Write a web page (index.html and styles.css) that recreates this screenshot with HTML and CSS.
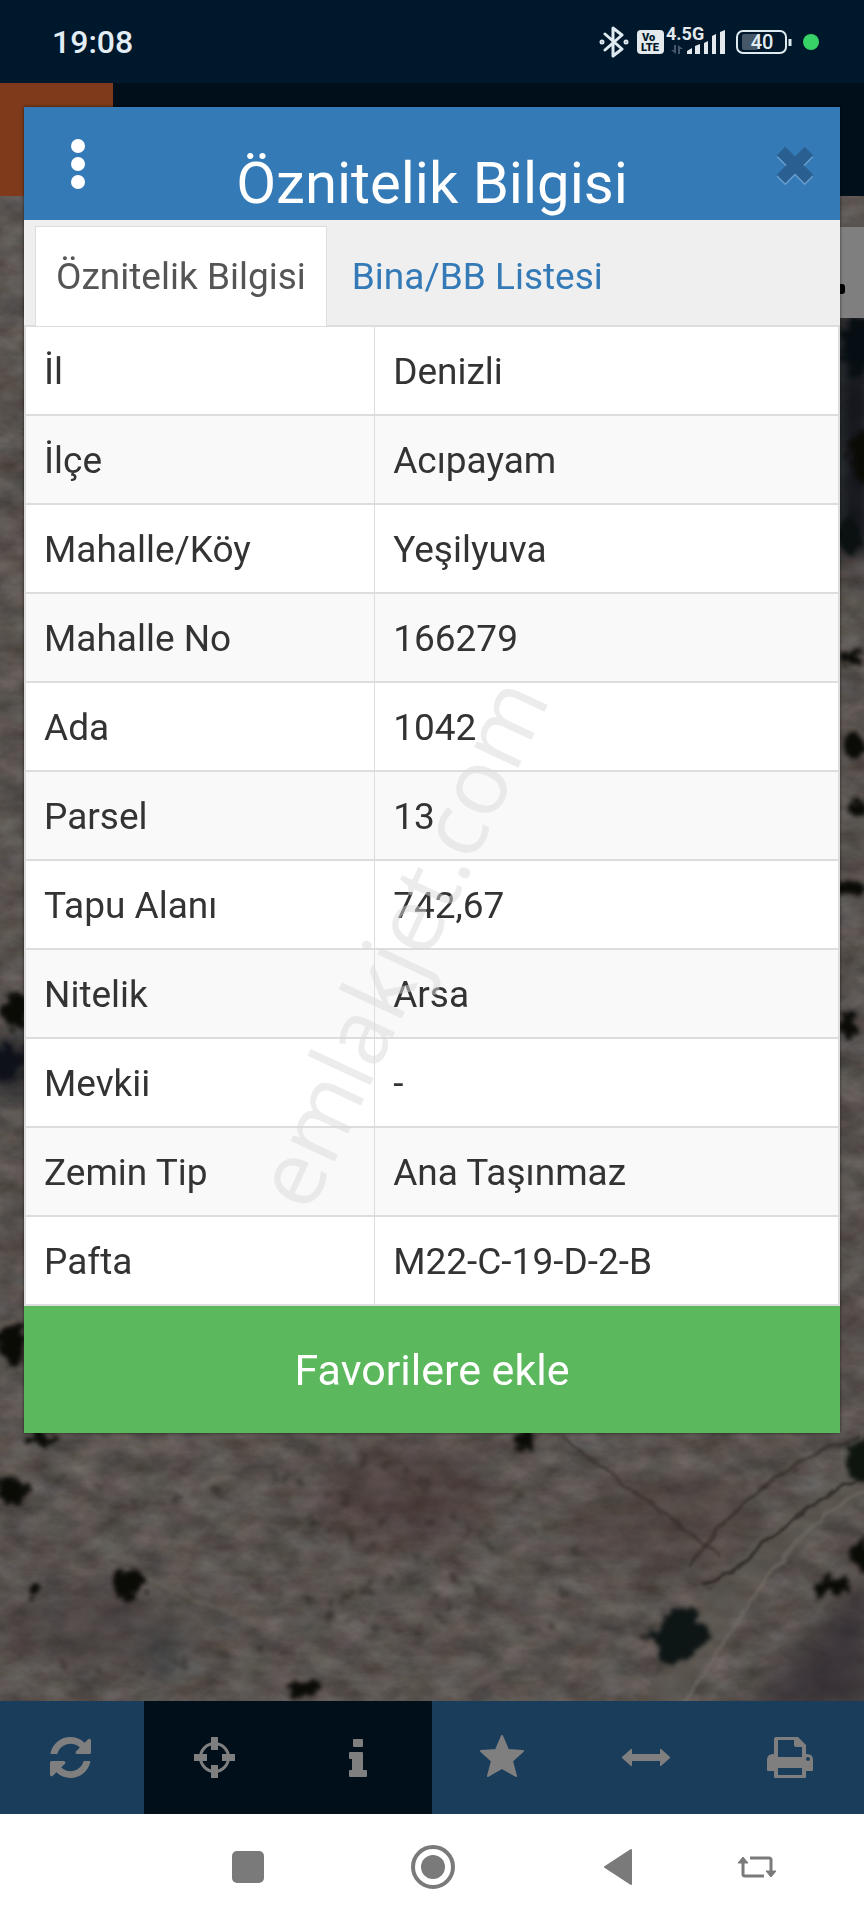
FILE: index.html
```html
<!DOCTYPE html>
<html lang="tr">
<head>
    <meta charset="UTF-8">
    <meta name="viewport" content="width=device-width, initial-scale=1.0">
    <title>Öznitelik Bilgisi</title>
    <link rel="stylesheet" href="styles.css">
</head>
<body>
    <div class="status-bar">
        <span class="status-time">19:08</span>
        <div class="status-icons">
            <svg class="icon-bluetooth" width="30" height="32" viewBox="0 0 30 32" fill="none" stroke="#dfe9f0" stroke-width="3" stroke-linejoin="round" stroke-linecap="round">
                <path d="M6 8l17 15-9 7V2l9 7L6 24"/>
                <circle cx="3" cy="16" r="1"/>
                <circle cx="27" cy="16" r="1"/>
            </svg>
            <svg width="27" height="24" viewBox="0 0 27 24">
                <rect width="27" height="24" rx="4" fill="#e3e9ed"/>
                <text x="5" y="11" class="volte-text">Vo</text>
                <text x="4" y="21" class="volte-text">LTE</text>
            </svg>
            <svg class="icon-signal" width="60" height="34" viewBox="0 0 60 34" fill="#e3e9ed">
                <text x="0" y="17" class="signal-text">4.5G</text>
                <path d="M10 22v9l-5-4h3v-5zM12 31v-9l5 4h-3v5z" fill="#44586a"/>
                <path d="M21 31v-3l5-3v6zM29 31v-8l5-2v10zM38 31V20l4-2v13zM46 31V13l4-2v20zM54 31V9l5-2v24z"/>
            </svg>
            <svg class="icon-battery" width="57" height="26" viewBox="0 0 57 26">
                <rect x="6" y="5" width="16" height="16" rx="2" fill="#44586a"/>
                <rect x="1" y="2" width="49" height="22" rx="6" fill="none" stroke="#dfe9f0" stroke-width="2"/>
                <path d="M54 10v7" stroke="#dfe9f0" stroke-width="3"/>
                <text x="26" y="20" class="battery-text">40</text>
            </svg>
            <span class="status-dot"></span>
        </div>
    </div>

    <div class="app">
        <div class="page">
            <header class="page-header">
                <div class="page-logo"></div>
            </header>

            <div class="map">
                <svg class="map-image" viewBox="0 0 864 1505" preserveAspectRatio="xMidYMax slice" aria-hidden="true">
                    <defs>
                        <filter id="ground" x="0" y="0" width="100%" height="100%" color-interpolation-filters="sRGB">
                            <feTurbulence type="fractalNoise" baseFrequency="0.03 0.05" numOctaves="5" seed="7"/>
                            <feColorMatrix values="0.42 0.1 0 0 0.44  0.42 0 0 0 0.44  0.42 0 0.08 0 0.37  0 0 0 0 1"/>
                        </filter>
                        <filter id="rough" x="-20%" y="-20%" width="140%" height="140%">
                            <feTurbulence type="fractalNoise" baseFrequency="0.09" numOctaves="3" seed="3"/>
                            <feDisplacementMap in="SourceGraphic" scale="22" xChannelSelector="R" yChannelSelector="G" result="shape"/>
                            <feGaussianBlur in="shape" stdDeviation="2"/>
                        </filter>
                        <filter id="track" x="-20%" y="-20%" width="140%" height="140%">
                            <feTurbulence type="fractalNoise" baseFrequency="0.05" numOctaves="2" seed="5"/>
                            <feDisplacementMap in="SourceGraphic" scale="10" xChannelSelector="R" yChannelSelector="G" result="shape"/>
                            <feGaussianBlur in="shape" stdDeviation="1"/>
                        </filter>
                        <filter id="soft" x="-30%" y="-30%" width="160%" height="160%">
                            <feGaussianBlur stdDeviation="14"/>
                        </filter>
                    </defs>
                    <rect width="864" height="1505" filter="url(#ground)"/>

                    <!-- toprak tonları -->
                    <g filter="url(#soft)">
                        <ellipse cx="400" cy="1300" rx="90" ry="50" fill="#7a4c4c" opacity="0.35"/>
                        <ellipse cx="165" cy="1460" rx="24" ry="26" fill="#60767c" opacity="0.5"/>
                        <ellipse cx="90" cy="1430" rx="90" ry="40" fill="#6d5f66" opacity="0.35"/>
                        <ellipse cx="670" cy="1330" rx="90" ry="50" fill="#86665e" opacity="0.35"/>
                        <path d="M740 1520l134-150v150z" fill="#5e5360" opacity="0.7"/>
                        <path d="M835 120h40v240h-40z" fill="#16222e"/>
                        <path d="M-10 845h34v50h-34z" fill="#16222e"/>
                    </g>

                    <!-- yol -->
                    <g fill="none" filter="url(#track)">
                        <path d="M870 1275Q790 1330 750 1375T660 1510" stroke="#b8b0a0" stroke-width="34" opacity="0.5"/>
                        <path d="M870 1290Q800 1330 765 1385L685 1505" stroke="#e6dece" stroke-width="4" opacity="0.5"/>
                        <path d="M870 1275Q780 1325 740 1373L700 1390" stroke="#40382e" stroke-width="4" opacity="0.6"/>
                        <path d="M860 1240Q760 1270 690 1370" stroke="#5a5044" stroke-width="4" opacity="0.5"/>
                        <path d="M560 1240L720 1360" stroke="#5a4c44" stroke-width="4" opacity="0.4"/>
                        <path d="M108 1366L260 1430" stroke="#d0c6ba" stroke-width="5" opacity="0.4"/>
                    </g>

                    <!-- çalılar -->
                    <g fill="none" stroke="#4c4238" stroke-width="7" stroke-linecap="round" opacity="0.5" filter="url(#rough)">
                        <path stroke-dasharray="1 22" d="M280 1280l60 20 50 30 60-10 50 40M290 1310l70 40 60 10 70 40M260 1390l60 20 80-30 60 30M330 1420l80 20 70-40M340 1260l60 10 40 30"/>
                        <path stroke-dasharray="1 40" d="M60 1280l80 30 100-20M20 1460l100 20 150-30M520 1300l60 60-30 80M760 1290l60-30"/>
                    </g>

                    <!-- ağaçlar -->
                    <g fill="#14140f" filter="url(#rough)">
                        <ellipse cx="128" cy="1388" rx="15" ry="14"/>
                        <ellipse cx="12" cy="1294" rx="16" ry="13"/>
                        <ellipse cx="12" cy="1148" rx="14" ry="22"/>
                        <ellipse cx="42" cy="1244" rx="18" ry="6"/>
                        <ellipse cx="34" cy="1394" rx="6" ry="6"/>
                        <ellipse cx="304" cy="1492" rx="18" ry="10"/>
                        <ellipse cx="525" cy="1244" rx="8" ry="12"/>
                        <path d="M668 1412l26 4 16 26-20 16-26 12-2-22-20-8 18-8z" fill="#1c2c2a"/>
                        <path d="M848 1246l26-6v44h-22z" fill="#1a2a1e"/>
                        <ellipse cx="862" cy="1360" rx="10" ry="18"/>
                        <path d="M820 1386l28-8 2 16-24 4-12 14z"/>
                        <ellipse cx="16" cy="815" rx="12" ry="20"/>
                        <ellipse cx="8" cy="866" rx="20" ry="14" fill="#1a2230"/>
                        <ellipse cx="858" cy="150" rx="16" ry="30" fill="#101c28"/>
                        <ellipse cx="862" cy="260" rx="12" ry="24"/>
                        <ellipse cx="850" cy="340" rx="12" ry="16" fill="#142420"/>
                        <ellipse cx="852" cy="462" rx="10" ry="10"/>
                        <ellipse cx="856" cy="550" rx="12" ry="10"/>
                        <ellipse cx="860" cy="610" rx="8" ry="9"/>
                        <ellipse cx="852" cy="690" rx="10" ry="8"/>
                        <ellipse cx="848" cy="830" rx="12" ry="10"/>
                    </g>
                </svg>
                <div class="map-panel"><span class="map-panel-mark"></span></div>
            </div>

            <nav class="toolbar">
                <button type="button" class="tool" aria-label="Yenile">
                    <svg width="41" height="41" viewBox="0 0 1536 1536" fill="currentColor"><path d="M1511 928q0 5-1 7-64 268-268 434.500t-478 166.500q-146 0-282.500-55t-243.500-157l-129 129q-19 19-45 19t-45-19-19-45v-448q0-26 19-45t45-19h448q26 0 45 19t19 45-19 45l-137 137q71 66 161 102t187 36q134 0 250-65t186-179q11-17 53-117 8-23 30-23h192q13 0 22.500 9.500t9.500 22.500zm25-800v448q0 26-19 45t-45 19h-448q-26 0-45-19t-19-45 19-45l138-138q-148-137-349-137-134 0-250 65t-186 179q-11 17-53 117-8 23-30 23h-199q-13 0-22.500-9.500t-9.500-22.500v-7q65-268 270-434.500t480-166.500q146 0 284 55.500t245 156.500l130-129q19-19 45-19t45 19 19 45z"/></svg>
                </button>
                <button type="button" class="tool tool-dark" aria-label="Konum">
                    <svg width="41" height="41" viewBox="0 0 41 41" fill="currentColor">
                        <circle cx="20.500" cy="20.500" r="14" fill="none" stroke="currentColor" stroke-width="3"/>
                        <path d="M17 0h7v13h-7zM17 28h7v13h-7zM0 17h13v7H0zM28 17h13v7H28z"/>
                    </svg>
                </button>
                <button type="button" class="tool tool-dark" aria-label="Bilgi">
                    <svg width="18" height="38" viewBox="0 0 18 38" fill="currentColor"><path d="M5 0h8q1 0 1 1v6q0 1-1 1H5q-1 0-1-1V1q0-1 1-1zM1 13h12q1 0 1 1v17h3q1 0 1 1v5q0 1-1 1H1q-1 0-1-1v-5q0-1 1-1h2V20H1q-1 0-1-1v-5q0-1 1-1z"/></svg>
                </button>
                <button type="button" class="tool" aria-label="Favoriler">
                    <svg class="icon-star" width="46" height="44" viewBox="0 0 46 44" fill="currentColor" stroke="currentColor" stroke-width="2" stroke-linejoin="round"><path d="M23 2l6 14 15 1-11 10 4 15-14-8-14 8 4-15L2 17l15-1z"/></svg>
                </button>
                <button type="button" class="tool" aria-label="Ölçüm">
                    <svg width="48" height="17" viewBox="0 0 48 17" fill="currentColor"><path d="M0 8L9 0h1v5h28V0h1l9 8v1l-9 8h-1v-5H10v5H9L0 9z"/></svg>
                </button>
                <button type="button" class="tool" aria-label="Yazdır">
                    <svg width="46" height="41" viewBox="0 0 46 41" fill="currentColor" fill-rule="evenodd"><path d="M9 0h22l8 8v9h1q6 0 6 6v10q0 1-1 1h-6v6q0 1-1 1H8q-1 0-1-1v-6H1q-1 0-1-1V23q0-6 6-6h1V2q0-2 2-2zM11 3v17h24V10h-6q-2 0-2-2V3zM11 31v7h24v-7zM41 20a2 2 0 100 4 2 2 0 000-4z"/></svg>
                </button>
            </nav>
        </div>

        <div class="modal-layer">
            <section class="modal" role="dialog" aria-labelledby="modal-title">
                <header class="modal-header">
                    <button type="button" class="modal-menu" aria-label="Menü">
                        <svg width="14" height="50" viewBox="0 0 14 50" fill="currentColor">
                            <circle cx="7" cy="7" r="7"/>
                            <circle cx="7" cy="25" r="7"/>
                            <circle cx="7" cy="43" r="7"/>
                        </svg>
                    </button>
                    <h1 class="modal-title" id="modal-title">Öznitelik Bilgisi</h1>
                    <button type="button" class="modal-close" aria-label="Kapat">
                        <svg width="38" height="40" viewBox="0 0 38 40" stroke-width="12">
                            <path d="M5 7l28 28M33 7L5 35" stroke="#6a9fce"/>
                            <path d="M5 5l28 28M33 5L5 33" stroke="#295f91"/>
                        </svg>
                    </button>
                </header>

                <div class="tabs">
                    <a href="#oznitelik" class="tab tab-active">Öznitelik Bilgisi</a>
                    <a href="#bina" class="tab">Bina/BB Listesi</a>
                </div>

                <table class="info-table" id="oznitelik">
                    <tbody>
                        <tr><th scope="row">İl</th><td>Denizli</td></tr>
                        <tr><th scope="row">İlçe</th><td>Acıpayam</td></tr>
                        <tr><th scope="row">Mahalle/Köy</th><td>Yeşilyuva</td></tr>
                        <tr><th scope="row">Mahalle No</th><td>166279</td></tr>
                        <tr><th scope="row">Ada</th><td>1042</td></tr>
                        <tr><th scope="row">Parsel</th><td>13</td></tr>
                        <tr><th scope="row">Tapu Alanı</th><td>742,67</td></tr>
                        <tr><th scope="row">Nitelik</th><td>Arsa</td></tr>
                        <tr><th scope="row">Mevkii</th><td>-</td></tr>
                        <tr><th scope="row">Zemin Tip</th><td>Ana Taşınmaz</td></tr>
                        <tr><th scope="row">Pafta</th><td>M22-C-19-D-2-B</td></tr>
                    </tbody>
                </table>

                <button type="button" class="btn-favorite">Favorilere ekle</button>
                <span class="watermark">emlakjet.com</span>
            </section>
        </div>
    </div>

    <nav class="system-nav">
        <button type="button" class="nav-recent" aria-label="Son uygulamalar">
            <svg width="32" height="32" viewBox="0 0 32 32" fill="currentColor"><rect width="32" height="32" rx="5"/></svg>
        </button>
        <button type="button" aria-label="Ana ekran">
            <svg width="44" height="44" viewBox="0 0 44 44" fill="currentColor">
                <circle cx="22" cy="22" r="20" fill="none" stroke="currentColor" stroke-width="4"/>
                <circle cx="22" cy="22" r="12"/>
            </svg>
        </button>
        <button type="button" aria-label="Geri">
            <svg width="30" height="38" viewBox="0 0 30 38" fill="currentColor" stroke="currentColor" stroke-width="2" stroke-linejoin="round"><path d="M2 19L28 2v34z"/></svg>
        </button>
        <button type="button" aria-label="Döndür">
            <svg width="40" height="24" viewBox="0 0 40 24" fill="none" stroke="currentColor" stroke-width="3">
                <path d="M13 3h19q2 0 2 2v11M27 21H8q-2 0-2-2V8"/>
                <path d="M6 2L1 8h10zM34 22l-5-6h10z" fill="currentColor" stroke-width="1"/>
            </svg>
        </button>
    </nav>
</body>
</html>
```
FILE: styles.css
```css
* {
    margin: 0;
    padding: 0;
    box-sizing: border-box;
}

:root {
    --primary: #337ab7;
    --success: #5cb85c;
    --navy: #001e34;
    --orange: #fc7436;
    --gray-100: #f9f9f9;
    --gray-200: #efefef;
    --gray-300: #dddddd;
    --text: #333333;
}

body {
    font-family: Roboto, "Noto Sans", sans-serif;
    font-size: 37px;
    color: var(--text);
    min-height: 100vh;
    display: flex;
    flex-direction: column;
}

button {
    border: none;
    background: none;
    font: inherit;
    color: inherit;
    cursor: pointer;
}

svg {
    display: block;
}

/* Durum çubuğu */
.status-bar {
    height: 83px;
    padding: 0 45px 0 52px;
    display: flex;
    align-items: center;
    justify-content: space-between;
    background: #00182b;
    color: #e3edf5;
}

.status-time {
    font-size: 32px;
    font-weight: 500;
}

.status-icons {
    display: flex;
    align-items: center;
}

.icon-bluetooth {
    margin-right: 8px;
}

.icon-signal {
    margin: 0 10px 4px 2px;
}

.icon-battery {
    margin-right: 10px;
}

.volte-text {
    font-size: 11px;
    font-weight: 900;
    fill: #00182b;
}

.signal-text {
    font-size: 18px;
    font-weight: 700;
}

.battery-text {
    font-size: 20px;
    font-weight: 500;
    text-anchor: middle;
    fill: #e3edf5;
}

.status-dot {
    width: 16px;
    height: 16px;
    border-radius: 50%;
    background: #37d366;
}

/* Harita sayfası ve modal aynı hücrede üst üste durur */
.app {
    flex: 1;
    display: grid;
}

.page,
.modal-layer {
    grid-area: 1 / 1;
}

.page {
    display: flex;
    flex-direction: column;
}

.page-header {
    height: 113px;
    background: var(--navy);
}

.page-logo {
    width: 113px;
    height: 100%;
    background: var(--orange);
}

.map {
    flex: 1;
    position: relative;
    overflow: hidden;
    background: #aca297;
}

.map-image {
    position: absolute;
    inset: 0;
    width: 100%;
    height: 100%;
}

.map-panel {
    position: absolute;
    top: 31px;
    right: 0;
    width: 80px;
    height: 91px;
    padding: 0 19px;
    display: flex;
    align-items: center;
    justify-content: flex-end;
    background: #fff;
}

.map-panel-mark {
    width: 24px;
    height: 10px;
    margin-top: 32px;
    border-radius: 3px;
    background: #000;
}

.toolbar {
    height: 113px;
    display: grid;
    grid-template-columns: repeat(6, 1fr);
    background: var(--primary);
    color: #fff;
}

.tool {
    display: flex;
    align-items: center;
    justify-content: center;
    padding-right: 4px;
}

.tool-dark {
    background: var(--navy);
}

.icon-star {
    margin-bottom: 4px;
}

/* Modal */
.modal-layer {
    position: relative;
    z-index: 1;
    padding: 24px;
    background: rgba(0, 0, 0, 0.5);
}

.modal {
    position: relative;
    background: #fff;
    box-shadow: 0 0 3px rgba(0, 0, 0, 0.6);
}

.modal-header {
    height: 113px;
    display: grid;
    grid-template-columns: 108px 1fr 108px;
    align-items: center;
    background: var(--primary);
    color: #fff;
}

.modal-menu,
.modal-close {
    display: flex;
    justify-content: center;
}

.modal-close {
    padding: 4px 0 0 18px;
}

.modal-title {
    padding-top: 40px;
    font-size: 58px;
    font-weight: 400;
    line-height: 73px;
    text-align: center;
    white-space: nowrap;
}

.tabs {
    display: flex;
    gap: 4px;
    padding: 6px 11px 0;
    background: var(--gray-200);
    border-bottom: 2px solid var(--gray-300);
}

.tab {
    padding: 2px 20px 0;
    border: 1px solid transparent;
    border-bottom: none;
    line-height: 96px;
    color: var(--primary);
    text-decoration: none;
}

.tab-active {
    margin-bottom: -1px;
    background: #fff;
    border-color: var(--gray-300);
    color: #555;
}

.info-table {
    width: 100%;
    border-collapse: separate;
    border-spacing: 0;
    border: solid var(--gray-300);
    border-width: 0 2px;
    table-layout: fixed;
}

.info-table th,
.info-table td {
    height: 89px;
    padding: 2px 18px 0;
    border-bottom: 2px solid var(--gray-300);
    font-weight: 400;
    text-align: left;
}

.info-table th {
    width: 43%;
    border-right: 1px solid var(--gray-300);
}

.info-table tr:nth-child(even) {
    background: var(--gray-100);
}

.btn-favorite {
    display: block;
    width: 100%;
    height: 127px;
    background: var(--success);
    color: #fff;
    font-size: 43px;
}

.watermark {
    position: absolute;
    top: 63%;
    left: 46%;
    transform: translate(-50%, -50%) rotate(-65deg);
    font-family: "Open Sans", sans-serif;
    font-size: 91px;
    line-height: 1;
    white-space: nowrap;
    color: rgba(218, 218, 218, 0.5);
    pointer-events: none;
}

/* Sistem gezinme çubuğu */
.system-nav {
    height: 106px;
    display: grid;
    grid-template-columns: 6fr 6fr 6fr 3fr;
    padding: 0 7% 0 18%;
    background: #fff;
    color: #7a7a7a;
}

.system-nav button {
    display: flex;
    align-items: center;
    justify-content: center;
}
```
